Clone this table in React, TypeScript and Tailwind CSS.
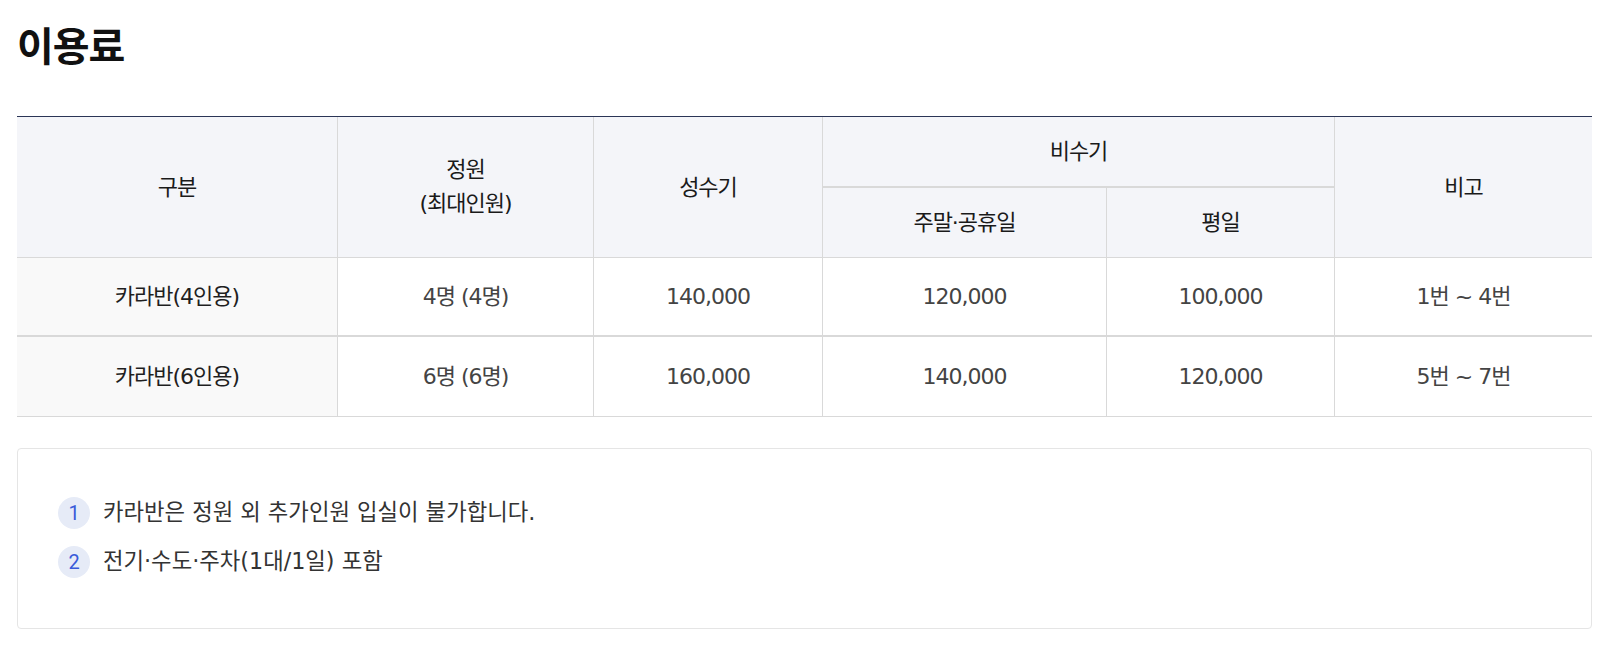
import React from "react";

const rows = [
  { name: "카라반(4인용)", cap: "4명 (4명)", peak: "140,000", weekend: "120,000", weekday: "100,000", note: "1번 ~ 4번" },
  { name: "카라반(6인용)", cap: "6명 (6명)", peak: "160,000", weekend: "140,000", weekday: "120,000", note: "5번 ~ 7번" },
];

const notes = ["카라반은 정원 외 추가인원 입실이 불가합니다.", "전기·수도·주차(1대/1일) 포함"];

const App = () => (
  <div className="min-h-[645px] bg-white pl-[17px] font-['DejaVu_Sans','Noto_Sans_CJK_KR',sans-serif]">
    <h2 className="pt-[24px] text-[40px] leading-[40px] font-bold tracking-[-1px] text-[#111] font-['Noto_Sans_CJK_KR',sans-serif]">
      이용료
    </h2>

    <table className="mt-[52px] w-[1575px] table-fixed border-separate border-spacing-0 border-t border-[#2b3556] text-[22px] tracking-[-1px] text-center">
      <colgroup>
        <col className="w-[320px]" />
        <col className="w-[256px]" />
        <col className="w-[229px]" />
        <col className="w-[284px]" />
        <col className="w-[228px]" />
        <col className="w-[258px]" />
      </colgroup>
      <thead className="bg-[#f4f5f9] text-[#1a1a1a]">
        <tr className="h-[71px]">
          <th rowSpan={2} className="font-normal border-b border-[#d9d9d9]">구분</th>
          <th rowSpan={2} className="font-normal leading-[34px] border-b border-l border-[#d9d9d9]">
            정원
            <br />
            (최대인원)
          </th>
          <th rowSpan={2} className="font-normal border-b border-l border-[#d9d9d9]">성수기</th>
          <th colSpan={2} className="font-normal border-b-2 border-l border-[#d9d9d9]">비수기</th>
          <th rowSpan={2} className="font-normal border-b border-l border-[#d9d9d9]">비고</th>
        </tr>
        <tr className="h-[70px]">
          <th className="font-normal border-b border-l border-[#d9d9d9]">주말·공휴일</th>
          <th className="font-normal border-b border-l border-[#d9d9d9]">평일</th>
        </tr>
      </thead>
      <tbody className="text-[#444]">
        {rows.map((r, i) => {
          const b = i === 0 ? "border-b-2" : "border-b";
          return (
            <tr key={r.name} className={i === 0 ? "h-[79px]" : "h-[80px]"}>
              <td className={`bg-[#f9f9f9] text-[#1f1f1f] ${b} border-[#d9d9d9]`}>{r.name}</td>
              <td className={`${b} border-l border-[#d9d9d9]`}>{r.cap}</td>
              <td className={`${b} border-l border-[#d9d9d9]`}>{r.peak}</td>
              <td className={`${b} border-l border-[#d9d9d9]`}>{r.weekend}</td>
              <td className={`${b} border-l border-[#d9d9d9]`}>{r.weekday}</td>
              <td className={`${b} border-l border-[#d9d9d9]`}>{r.note}</td>
            </tr>
          );
        })}
      </tbody>
    </table>

    <div className="mt-[31px] w-[1575px] rounded-[4px] border border-[#e5e5e5] pt-[48px] pb-[50px] pl-[40px]">
      <ul className="flex flex-col gap-[17px]">
        {notes.map((n, i) => (
          <li key={n} className="flex items-center gap-[13px] h-[32px]">
            <span className="flex h-[32px] w-[32px] items-center justify-center rounded-full bg-[#e6ebf7] text-[20px] text-[#3a5bd9] font-['Roboto',sans-serif]">
              {i + 1}
            </span>
            <span className="text-[22.3px] text-[#333]">{n}</span>
          </li>
        ))}
      </ul>
    </div>
  </div>
);

export default App;
